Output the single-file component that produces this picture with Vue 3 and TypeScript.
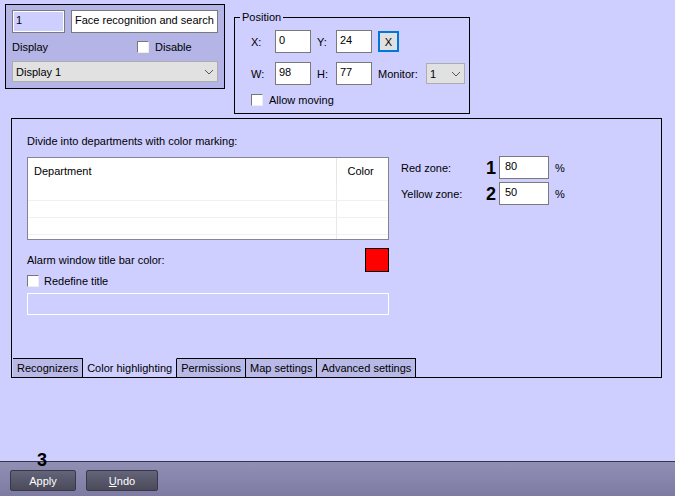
<script setup lang="ts">
import { reactive, ref } from 'vue'

const tabs = ['Recognizers', 'Color highlighting', 'Permissions', 'Map settings', 'Advanced settings']
const activeTab = ref('Color highlighting')

const defaults = {
  id: '1',
  name: 'Face recognition and search 1',
  disabled: false,
  display: 'Display 1',
  x: '0',
  y: '24',
  w: '98',
  h: '77',
  monitor: '1',
  allowMoving: false,
  redefineTitle: false,
  title: '',
}
const form = reactive({ ...defaults })

const zones = reactive([
  { id: 'red', label: 'Red zone:', step: 1, value: '80' },
  { id: 'yellow', label: 'Yellow zone:', step: 2, value: '50' },
])

const emptyRows = 4

function undo(): void {
  Object.assign(form, defaults)
  zones[0].value = '80'
  zones[1].value = '50'
}
</script>

<template>
  <form class="page" @submit.prevent>
    <header class="top">
      <section class="identity">
        <div class="row">
          <input v-model="form.id" class="field id" type="text" readonly aria-label="Identifier" />
          <input v-model="form.name" class="field name" type="text" aria-label="Name" />
        </div>
        <div class="row between">
          <label for="display">Display</label>
          <label class="check disable"><input v-model="form.disabled" type="checkbox" />Disable</label>
        </div>
        <div class="select">
          <select id="display" v-model="form.display">
            <option>Display 1</option>
          </select>
          <svg class="chevron" viewBox="0 0 10 6" aria-hidden="true"><path d="M1 1l4 4 4-4" /></svg>
        </div>
      </section>

      <fieldset class="position">
        <legend>Position</legend>
        <div class="grid">
          <label for="pos-x">X:</label>
          <input id="pos-x" v-model="form.x" class="field" type="text" />
          <label for="pos-y">Y:</label>
          <input id="pos-y" v-model="form.y" class="field" type="text" />
          <button class="pick" type="button">X</button>
          <label for="pos-w">W:</label>
          <input id="pos-w" v-model="form.w" class="field" type="text" />
          <label for="pos-h">H:</label>
          <input id="pos-h" v-model="form.h" class="field" type="text" />
          <div class="monitor">
            <label for="monitor">Monitor:</label>
            <div class="select">
              <select id="monitor" v-model="form.monitor">
                <option>1</option>
              </select>
              <svg class="chevron" viewBox="0 0 10 6" aria-hidden="true"><path d="M1 1l4 4 4-4" /></svg>
            </div>
          </div>
        </div>
        <label class="check"><input v-model="form.allowMoving" type="checkbox" />Allow moving</label>
      </fieldset>
    </header>

    <main class="panel">
      <div class="content">
        <section class="departments">
          <h2 id="departments-title">Divide into departments with color marking:</h2>
          <div class="list">
            <table aria-labelledby="departments-title">
              <thead>
                <tr><th>Department</th><th class="color">Color</th></tr>
              </thead>
              <tbody>
                <tr v-for="n in emptyRows" :key="n"><td></td><td></td></tr>
              </tbody>
            </table>
          </div>
          <div class="alarm">
            <span id="alarm-label">Alarm window title bar color:</span>
            <button class="swatch" type="button" aria-labelledby="alarm-label"></button>
          </div>
          <label id="redefine" class="check"><input v-model="form.redefineTitle" type="checkbox" />Redefine title</label>
          <input v-model="form.title" class="title" type="text" :disabled="!form.redefineTitle" aria-labelledby="redefine" />
        </section>

        <section class="zones">
          <div v-for="zone in zones" :key="zone.id" class="zone">
            <label :for="zone.id">{{ zone.label }}</label>
            <b class="step">{{ zone.step }}</b>
            <input :id="zone.id" v-model="zone.value" class="field" type="text" />
            <span class="percent">%</span>
          </div>
        </section>
      </div>

      <nav class="tabs" role="tablist">
        <button
          v-for="tab in tabs"
          :key="tab"
          type="button"
          role="tab"
          :aria-selected="tab === activeTab"
          :class="['tab', { active: tab === activeTab }]"
          @click="activeTab = tab"
        >{{ tab }}</button>
      </nav>
    </main>

    <footer class="footer">
      <button class="action apply" type="submit">Apply<b class="step callout">3</b></button>
      <button class="action" type="button" @click="undo"><u>U</u>ndo</button>
    </footer>
  </form>
</template>

<style>
body {
  margin: 0;
  background: #ceceff;
}
</style>

<style scoped>
.page {
  display: flex;
  flex-direction: column;
  min-height: 100vh;
  box-sizing: border-box;
  font: 11px/14px "Liberation Sans", Arial, sans-serif;
  color: #000;
}
.page *,
.page *::before {
  box-sizing: border-box;
}
button,
input,
select {
  margin: 0;
  font: inherit;
  color: inherit;
  border-radius: 0;
}
.top {
  display: flex;
  align-items: flex-start;
  gap: 9px;
  padding: 4px 5px;
}
.identity {
  display: flex;
  flex-direction: column;
  gap: 7px;
  width: 220px;
  padding: 5px 6px 6px;
  border: 1px solid #000;
  background: #b4b4e6;
}
.row {
  display: flex;
  gap: 6px;
}
.between {
  justify-content: space-between;
}
.disable {
  width: 81px;
}
.field {
  width: 100%;
  min-width: 0;
  height: 23px;
  padding: 0 0 3px 3px;
  border: 1px solid #7a7a7a;
  background: #fff;
  outline: none;
}
.id {
  flex: none;
  width: 53px;
  background: #ceceff;
  box-shadow: inset 0 0 0 1px #fff;
}
.check {
  display: flex;
  align-items: center;
  gap: 6px;
}
.check input {
  appearance: none;
  width: 12px;
  height: 12px;
  border: 1px solid;
  border-color: #777 #eee #eee #777;
  background: #fff;
}
.check input:checked {
  background: radial-gradient(circle, #222 3px, #fff 4px);
}
.select {
  position: relative;
  display: flex;
}
.select select {
  appearance: none;
  width: 100%;
  height: 21px;
  padding: 0 18px 0 3px;
  border: 1px solid #adadad;
  background: #e1e1e1;
  outline: none;
}
.chevron {
  position: absolute;
  right: 4px;
  top: 8px;
  width: 10px;
  height: 6px;
  fill: none;
  stroke: #555;
  pointer-events: none;
}
.position {
  width: 236px;
  margin: 6px 0 0;
  padding: 6px 4px 6px 16px;
  border: 1px solid #000;
}
.position legend {
  margin-left: -11px;
  padding: 0 2px;
}
.grid {
  display: grid;
  grid-template-columns: 18px 36px 13px 36px 1fr;
  gap: 9px 6px;
  align-items: center;
  margin-bottom: 8px;
}
.pick {
  width: 21px;
  height: 21px;
  padding: 0;
  border: 2px solid #0078d7;
  background: #e1e1e1;
}
.monitor {
  display: flex;
  align-items: center;
  justify-content: space-between;
}
.monitor .select {
  width: 39px;
}
.panel {
  display: flex;
  flex-direction: column;
  margin: 0 13px 24px 11px;
  border: 1px solid #000;
}
.content {
  display: flex;
  gap: 12px;
  padding: 15px 15px 43px;
}
.departments {
  display: flex;
  flex-direction: column;
  width: 362px;
}
h2 {
  margin: 0 0 9px;
  font: inherit;
}
.list {
  height: 83px;
  overflow: hidden;
  border: 1px solid #828790;
  background: #fff;
}
table {
  width: 100%;
  border-collapse: collapse;
}
th {
  height: 25px;
  padding: 0 6px;
  font-weight: normal;
  text-align: left;
}
.color {
  width: 52px;
  padding: 0 11px;
  border-left: 1px solid #e5e5e5;
}
td {
  height: 17px;
  padding: 0;
  border-bottom: 1px solid #f0f0f0;
}
td + td {
  border-left: 1px solid #e8e8e8;
}
.alarm {
  display: flex;
  align-items: center;
  justify-content: space-between;
  margin: 8px 0 2px;
}
.swatch {
  width: 24px;
  height: 24px;
  border: 1px solid #000;
  background: #f00;
}
.departments .check {
  gap: 5px;
}
.title {
  height: 22px;
  margin-top: 5px;
  padding: 0 4px;
  border: 1px solid #fff;
  background: transparent;
}
.zones {
  display: flex;
  flex-direction: column;
  gap: 3px;
  padding-top: 22px;
}
.zone {
  display: grid;
  grid-template-columns: 85px 13px 50px 1fr;
  align-items: center;
}
.zone .field {
  padding-left: 5px;
}
.percent {
  padding-left: 6px;
}
.step {
  font: bold 18px/20px "Liberation Sans", Arial, sans-serif;
  color: #000;
}
.tabs {
  display: flex;
  padding-left: 1px;
}
.tab {
  height: 19px;
  padding: 0 4px;
  border: 0 solid #000;
  border-width: 1px 1px 0 0;
  background: #b9b9e8;
  white-space: nowrap;
}
.tab.active {
  border-top-color: transparent;
  background: transparent;
}
.footer {
  display: flex;
  gap: 10px;
  margin-top: auto;
  padding: 8px 10px 5px;
  border-top: 1px solid #33334a;
  background: linear-gradient(#918fb4, #7d7ba3);
}
.action {
  width: 72px;
  height: 21px;
  padding: 0;
  border: 1px solid #383846;
  border-radius: 2px;
  background: linear-gradient(#64647a, #4a4a5a);
  color: #fff;
}
.apply {
  position: relative;
  width: 66px;
}
.callout {
  position: absolute;
  left: 26px;
  top: -21px;
}
</style>
